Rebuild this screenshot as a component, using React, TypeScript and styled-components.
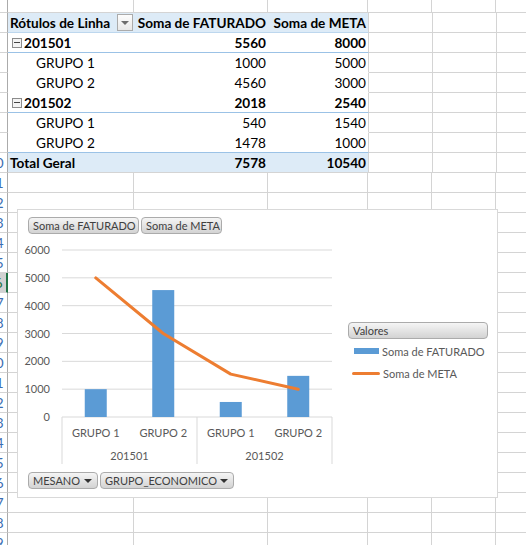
import styled, { createGlobalStyle } from 'styled-components';

const GlobalStyle = createGlobalStyle`
  html, body {
    margin: 0;
    padding: 0;
    background: #fff;
  }
  body {
    font-family: Lato, "Open Sans", "Liberation Sans", sans-serif;
  }
`;

const COLS = [126, 134, 100, 64, 64, 64];
const GRID = '#D4D4D4';
const BLUE_LINE = '#9BC2E6';
const BLUE_FILL = '#DDEBF7';
const FIRST_ROW = 2;
const ROW_COUNT = 28;
const SELECTED_ROW = 16;

type PivotLine = { kind: 'head' | 'group' | 'item' | 'total'; label: string; f: string; m: string; line: string };

const pivot: PivotLine[] = [
  { kind: 'head', label: 'Rótulos de Linha', f: 'Soma de FATURADO', m: 'Soma de META', line: '#BDD7EE' },
  { kind: 'group', label: '201501', f: '5560', m: '8000', line: BLUE_LINE },
  { kind: 'item', label: 'GRUPO 1', f: '1000', m: '5000', line: '#fff' },
  { kind: 'item', label: 'GRUPO 2', f: '4560', m: '3000', line: '#fff' },
  { kind: 'group', label: '201502', f: '2018', m: '2540', line: BLUE_LINE },
  { kind: 'item', label: 'GRUPO 1', f: '540', m: '1540', line: '#fff' },
  { kind: 'item', label: 'GRUPO 2', f: '1478', m: '1000', line: BLUE_LINE },
  { kind: 'total', label: 'Total Geral', f: '7578', m: '10540', line: GRID },
];

const chartData = [
  { cat: 'GRUPO 1', f: 1000, m: 5000 },
  { cat: 'GRUPO 2', f: 4560, m: 3000 },
  { cat: 'GRUPO 1', f: 540, m: 1540 },
  { cat: 'GRUPO 2', f: 1478, m: 1000 },
];

const Page = styled.div`
  position: relative;
  width: 526px;
  height: 545px;
  overflow: hidden;
  background: #fff;
`;

const Sheet = styled.div`
  display: flex;
  flex-direction: column;
`;

const SheetRow = styled.div<{ $h: number }>`
  display: flex;
  height: ${(p) => p.$h}px;
  flex-shrink: 0;
`;

/* only the right end of the row header is in view, so the numbers are clipped */
const RowHead = styled.div<{ $selected: boolean }>`
  width: 8px;
  flex-shrink: 0;
  box-sizing: border-box;
  display: flex;
  justify-content: flex-end;
  align-items: center;
  overflow: hidden;
  font-size: 14px;
  color: ${(p) => (p.$selected ? '#217346' : '#3B6DB3')};
  background: ${(p) => (p.$selected ? '#D2D2D2' : '#fff')};
  border-bottom: 1px solid ${GRID};
  border-right: ${(p) => (p.$selected ? '2px solid #217346' : '1px solid #ABABAB')};
`;

const RowNumber = styled.span`
  flex-shrink: 0;
  width: 23px;
  text-align: center;
  white-space: nowrap;
`;

const Cell = styled.div<{ $w: number }>`
  width: ${(p) => p.$w}px;
  flex-shrink: 0;
  box-sizing: border-box;
  border-right: 1px solid ${GRID};
  border-bottom: 1px solid ${GRID};
`;

const PivotRow = styled.div<{ $kind: PivotLine['kind']; $line: string }>`
  display: grid;
  grid-template-columns: 126px 134px 100px;
  flex-shrink: 0;
  box-sizing: border-box;
  font-size: 13.6px;
  color: #000;
  font-weight: ${(p) => (p.$kind === 'item' ? 400 : 700)};
  background: ${(p) => (p.$kind === 'head' || p.$kind === 'total' ? BLUE_FILL : '#fff')};
  border-bottom: 1px solid ${(p) => p.$line};
  border-right: 1px solid ${GRID};
`;

const LabelCell = styled.div<{ $indent: number }>`
  display: flex;
  align-items: center;
  gap: 2px;
  padding-left: ${(p) => p.$indent}px;
  white-space: nowrap;
  overflow: hidden;
`;

const ValueCell = styled.div`
  display: flex;
  align-items: center;
  justify-content: flex-end;
  padding-right: 2px;
  white-space: nowrap;
`;

const FilterButton = styled.span`
  width: 16px;
  height: 17px;
  margin-left: auto;
  margin-right: 1px;
  box-sizing: border-box;
  border: 1px solid #ABABAB;
  background: linear-gradient(#FDFDFD, #E8E8E8);
  display: flex;
  align-items: center;
  justify-content: center;
  &::after {
    content: '';
    border-left: 4px solid transparent;
    border-right: 4px solid transparent;
    border-top: 4px solid #6D6D6D;
  }
`;

const Collapse = styled.span`
  width: 10px;
  height: 10px;
  box-sizing: border-box;
  border: 1px solid #8C8C8C;
  background: #F3F3F3;
  display: flex;
  align-items: center;
  justify-content: center;
  &::after {
    content: '';
    width: 6px;
    height: 1px;
    background: #444;
  }
`;

const ChartBox = styled.div`
  position: absolute;
  left: 17px;
  top: 209px;
  width: 481px;
  height: 289px;
  box-sizing: border-box;
  border: 1px solid #D9D9D9;
  background: #fff;
  padding-top: 7px;
  display: flex;
  flex-direction: column;
  font-size: 11px;
  color: #595959;
`;

const FieldBar = styled.div`
  display: flex;
  gap: 2px;
  height: 17px;
  margin-left: 10px;
`;

const FieldButton = styled.div<{ $w: number; $arrow?: boolean }>`
  width: ${(p) => p.$w}px;
  height: 17px;
  box-sizing: border-box;
  border: 1px solid #ABABAB;
  border-radius: 4px;
  background: linear-gradient(#F5F5F5, #D3D3D3);
  color: #404040;
  font-size: 11px;
  display: flex;
  align-items: center;
  padding: 0 5px 0 4px;
  white-space: nowrap;
  ${(p) =>
    p.$arrow &&
    `
    &::after {
      content: '';
      margin-left: auto;
      border-left: 4px solid transparent;
      border-right: 4px solid transparent;
      border-top: 4px solid #333;
    }
  `}
`;

const ChartBody = styled.div`
  display: flex;
  height: 238px;
`;

const Plot = styled.svg`
  width: 330px;
  height: 238px;
  flex-shrink: 0;
  font-family: Lato, "Open Sans", "Liberation Sans", sans-serif;
  font-size: 11px;
`;

const Legend = styled.div`
  margin-top: 88px;
  width: 140px;
  display: flex;
  flex-direction: column;
`;

const LegendItems = styled.div`
  display: flex;
  flex-direction: column;
  padding-top: 1px;
`;

const LegendItem = styled.div`
  display: flex;
  align-items: center;
  height: 22px;
  gap: 3px;
  white-space: nowrap;
`;

const Swatch = styled.span<{ $bar: boolean }>`
  display: inline-block;
  flex-shrink: 0;
  width: ${(p) => (p.$bar ? 25 : 28)}px;
  height: ${(p) => (p.$bar ? 6 : 3)}px;
  margin-left: ${(p) => (p.$bar ? 6 : 4)}px;
  background: ${(p) => (p.$bar ? '#5B9BD5' : '#ED7D31')};
  border-radius: ${(p) => (p.$bar ? 0 : 2)}px;
`;

const y0 = 183;
const scale = 167 / 6000;
const yOf = (v: number) => y0 - v * scale;
const xOf = (i: number) => 44 + 33.75 * (2 * i + 1);

const PlotArea = () => (
  <Plot viewBox="0 0 330 238">
    {[6000, 5000, 4000, 3000, 2000, 1000, 0].map((v) => (
      <g key={v}>
        <line x1={44} x2={314} y1={yOf(v)} y2={yOf(v)} stroke="#D9D9D9" strokeWidth={1} />
        <text x={32} y={yOf(v) + 4} textAnchor="end" fill="#595959">{v}</text>
      </g>
    ))}
    {[44, 179, 314].map((x) => (
      <line key={x} x1={x} x2={x} y1={y0} y2={230} stroke="#D9D9D9" strokeWidth={1} />
    ))}
    {chartData.map((d, i) => (
      <rect key={i} x={xOf(i) - 11} y={yOf(d.f)} width={22} height={d.f * scale} fill="#5B9BD5" />
    ))}
    <polyline
      points={chartData.map((d, i) => `${xOf(i)},${yOf(d.m)}`).join(' ')}
      fill="none"
      stroke="#ED7D31"
      strokeWidth={3}
      strokeLinecap="round"
      strokeLinejoin="round"
    />
    {chartData.map((d, i) => (
      <text key={i} x={xOf(i)} y={203} textAnchor="middle" fill="#595959">{d.cat}</text>
    ))}
    <text x={111.5} y={226} textAnchor="middle" fill="#595959">201501</text>
    <text x={246.5} y={226} textAnchor="middle" fill="#595959">201502</text>
  </Plot>
);

const PivotChart = () => (
  <ChartBox>
    <FieldBar>
      <FieldButton $w={111}>Soma de FATURADO</FieldButton>
      <FieldButton $w={81}>Soma de META</FieldButton>
    </FieldBar>
    <ChartBody>
      <PlotArea />
      <Legend>
        <FieldButton $w={140}>Valores</FieldButton>
        <LegendItems>
          <LegendItem>
            <Swatch $bar />
            Soma de FATURADO
          </LegendItem>
          <LegendItem>
            <Swatch $bar={false} />
            Soma de META
          </LegendItem>
        </LegendItems>
      </Legend>
    </ChartBody>
    <FieldBar>
      <FieldButton $w={70} $arrow>MESANO</FieldButton>
      <FieldButton $w={134} $arrow>GRUPO_ECONOMICO</FieldButton>
    </FieldBar>
  </ChartBox>
);

const PivotCells = ({ row }: { row: PivotLine }) => (
  <PivotRow $kind={row.kind} $line={row.line}>
    <LabelCell $indent={row.kind === 'item' ? 28 : row.kind === 'group' ? 4 : 2}>
      {row.kind === 'group' && <Collapse />}
      {row.label}
      {row.kind === 'head' && <FilterButton />}
    </LabelCell>
    <ValueCell>{row.f}</ValueCell>
    <ValueCell>{row.m}</ValueCell>
  </PivotRow>
);

export default function App() {
  const rows = Array.from({ length: ROW_COUNT }, (_, i) => FIRST_ROW + i);
  return (
    <Page>
      <GlobalStyle />
      <Sheet>
        {rows.map((n, i) => {
          const p = pivot[n - 3];
          return (
            <SheetRow key={n} $h={i === 0 ? 13 : 20}>
              <RowHead $selected={n === SELECTED_ROW}>
                <RowNumber>{n}</RowNumber>
              </RowHead>
              {p ? (
                <PivotCells row={p} />
              ) : (
                COLS.slice(0, 3).map((w, c) => <Cell key={c} $w={w} />)
              )}
              {COLS.slice(3).map((w, c) => (
                <Cell key={c + 3} $w={w} />
              ))}
            </SheetRow>
          );
        })}
      </Sheet>
      <PivotChart />
    </Page>
  );
}
